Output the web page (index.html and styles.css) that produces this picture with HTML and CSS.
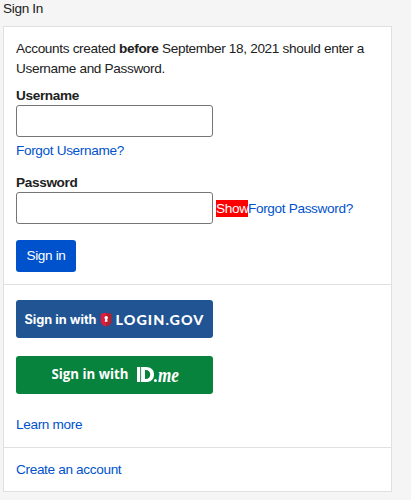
FILE: index.html
```
<!DOCTYPE html>
<html lang="en">
<head>
  <meta charset="UTF-8">
  <meta name="viewport" content="width=device-width, initial-scale=1.0">
  <title>Sign In</title>
  <link rel="stylesheet" href="styles.css">
</head>
<body>
  <h1>Sign In</h1>
  <div class="card">
    <form class="section login-form">
      <p>Accounts created <strong>before</strong> September 18, 2021 should enter a Username and Password.</p>

      <label for="username">Username</label>
      <input type="text" id="username" name="username">
      <a class="forgot-username" href="#">Forgot Username?</a>

      <label for="password">Password</label>
      <div class="password-row">
        <input type="password" id="password" name="password">
        <span class="show">Show</span><a href="#">Forgot Password?</a>
      </div>

      <button type="submit">Sign in</button>
    </form>

    <div class="section partners">
      <a class="partner login-gov" href="#">
        <svg width="197" height="38" viewBox="0 0 197 38">
          <text class="gov-text" x="8.5" y="24.3" textLength="72" lengthAdjust="spacingAndGlyphs">Sign in with</text>
          <path d="M84.8 13.7L90.2 12.8V26.5C87 25.5 84.8 24 84.8 21Z" fill="#e31c3d"/>
          <path d="M90.2 12.8L95.6 13.7V21C95.6 24 93.4 25.5 90.2 26.5Z" fill="#b5202f"/>
          <circle cx="90.2" cy="17.7" r="1.7" fill="#fff"/>
          <path d="M89.4 17.7H91L91.6 21.7H88.8Z" fill="#fff"/>
          <text class="gov-logo" x="99.5" y="24.6" textLength="89" lengthAdjust="spacingAndGlyphs">LOGIN.GOV</text>
        </svg>
      </a>
      <a class="partner id-me" href="#">
        <svg width="197" height="38" viewBox="0 0 197 38">
          <text class="id-text" x="35.5" y="23.3" textLength="77" lengthAdjust="spacingAndGlyphs">Sign in with</text>
          <path d="M121 11H124.2V26H121Z" fill="#fff"/>
          <path fill-rule="evenodd" d="M125.1 11H129.8C135 11 138 13.8 138 18.4C138 23.2 135 26 129.8 26H125.1ZM129 14V23C132.4 23.2 134.2 21.6 134.2 18.5C134.2 15.3 132.4 13.8 129 14Z" fill="#fff"/>
          <circle cx="139.4" cy="24.5" r="1.5" fill="#fff"/>
          <text class="me-text" x="142" y="26" textLength="21" lengthAdjust="spacingAndGlyphs">me</text>
        </svg>
      </a>
      <a href="#">Learn more</a>
    </div>

    <div class="section create">
      <a href="#">Create an account</a>
    </div>
  </div>
</body>
</html>
```
FILE: styles.css
```
* {
  box-sizing: border-box;
}

body {
  margin: 0;
  padding: 0 3px;
  background-color: #f5f5f5;
  color: #212121;
  font-family: "Liberation Sans", Arial, sans-serif;
  font-size: 13.6px;
  letter-spacing: -0.34px;
  line-height: 19.5px;
}

h1 {
  margin: 0;
  padding-bottom: 8px;
  font-size: 13.6px;
  font-weight: normal;
  line-height: 18px;
}

a {
  color: #0052cc;
  text-decoration: none;
}

.card {
  width: 389px;
  height: 466px;
  background-color: #fff;
  border: 1px solid #e0e0e0;
}

.section {
  padding: 0 12px;
  border-bottom: 1px solid #e0e0e0;
}

.login-form {
  height: 258px;
  padding-top: 12px;
}

.login-form p {
  margin: 0 0 8px;
}

label {
  display: block;
  font-weight: bold;
  line-height: 19px;
}

input {
  display: block;
  width: 197px;
  height: 32px;
  padding: 0 8px;
  background-color: #fff;
  border: 1px solid #757575;
  border-radius: 3px;
}

.forgot-username {
  display: block;
  margin: 4px 0 12px;
}

.password-row {
  display: flex;
  align-items: center;
}

.password-row a {
  line-height: 17px;
  margin-top: 1px;
}

.show {
  width: 32px;
  margin: 1px 0 0 3px;
  background-color: #f00;
  color: #fff;
  line-height: 17px;
}

button {
  width: 60px;
  height: 32px;
  margin-top: 16px;
  padding: 0;
  background-color: #0052cc;
  border: none;
  border-radius: 3px;
  color: #fff;
  font: inherit;
  letter-spacing: inherit;
}

.partners {
  height: 163px;
  padding-top: 15px;
}

.partner {
  display: block;
  width: 197px;
  height: 38px;
  margin-bottom: 18px;
  border-radius: 3px;
  letter-spacing: normal;
}

.partner svg {
  display: block;
}

.partner text {
  fill: #fff;
}

.login-gov {
  background-color: #205493;
}

.id-me {
  background-color: #08833d;
  margin-bottom: 21px;
}

.gov-text {
  font: bold 12.5px Inter, sans-serif;
}

.gov-logo {
  font: 900 13.6px Lato, sans-serif;
  letter-spacing: 1px;
}

.id-text {
  font: bold 13.5px "Open Sans", sans-serif;
}

.me-text {
  font: italic bold 20px "Liberation Serif", serif;
}

.create {
  padding-top: 12px;
  border-bottom: none;
}
```
